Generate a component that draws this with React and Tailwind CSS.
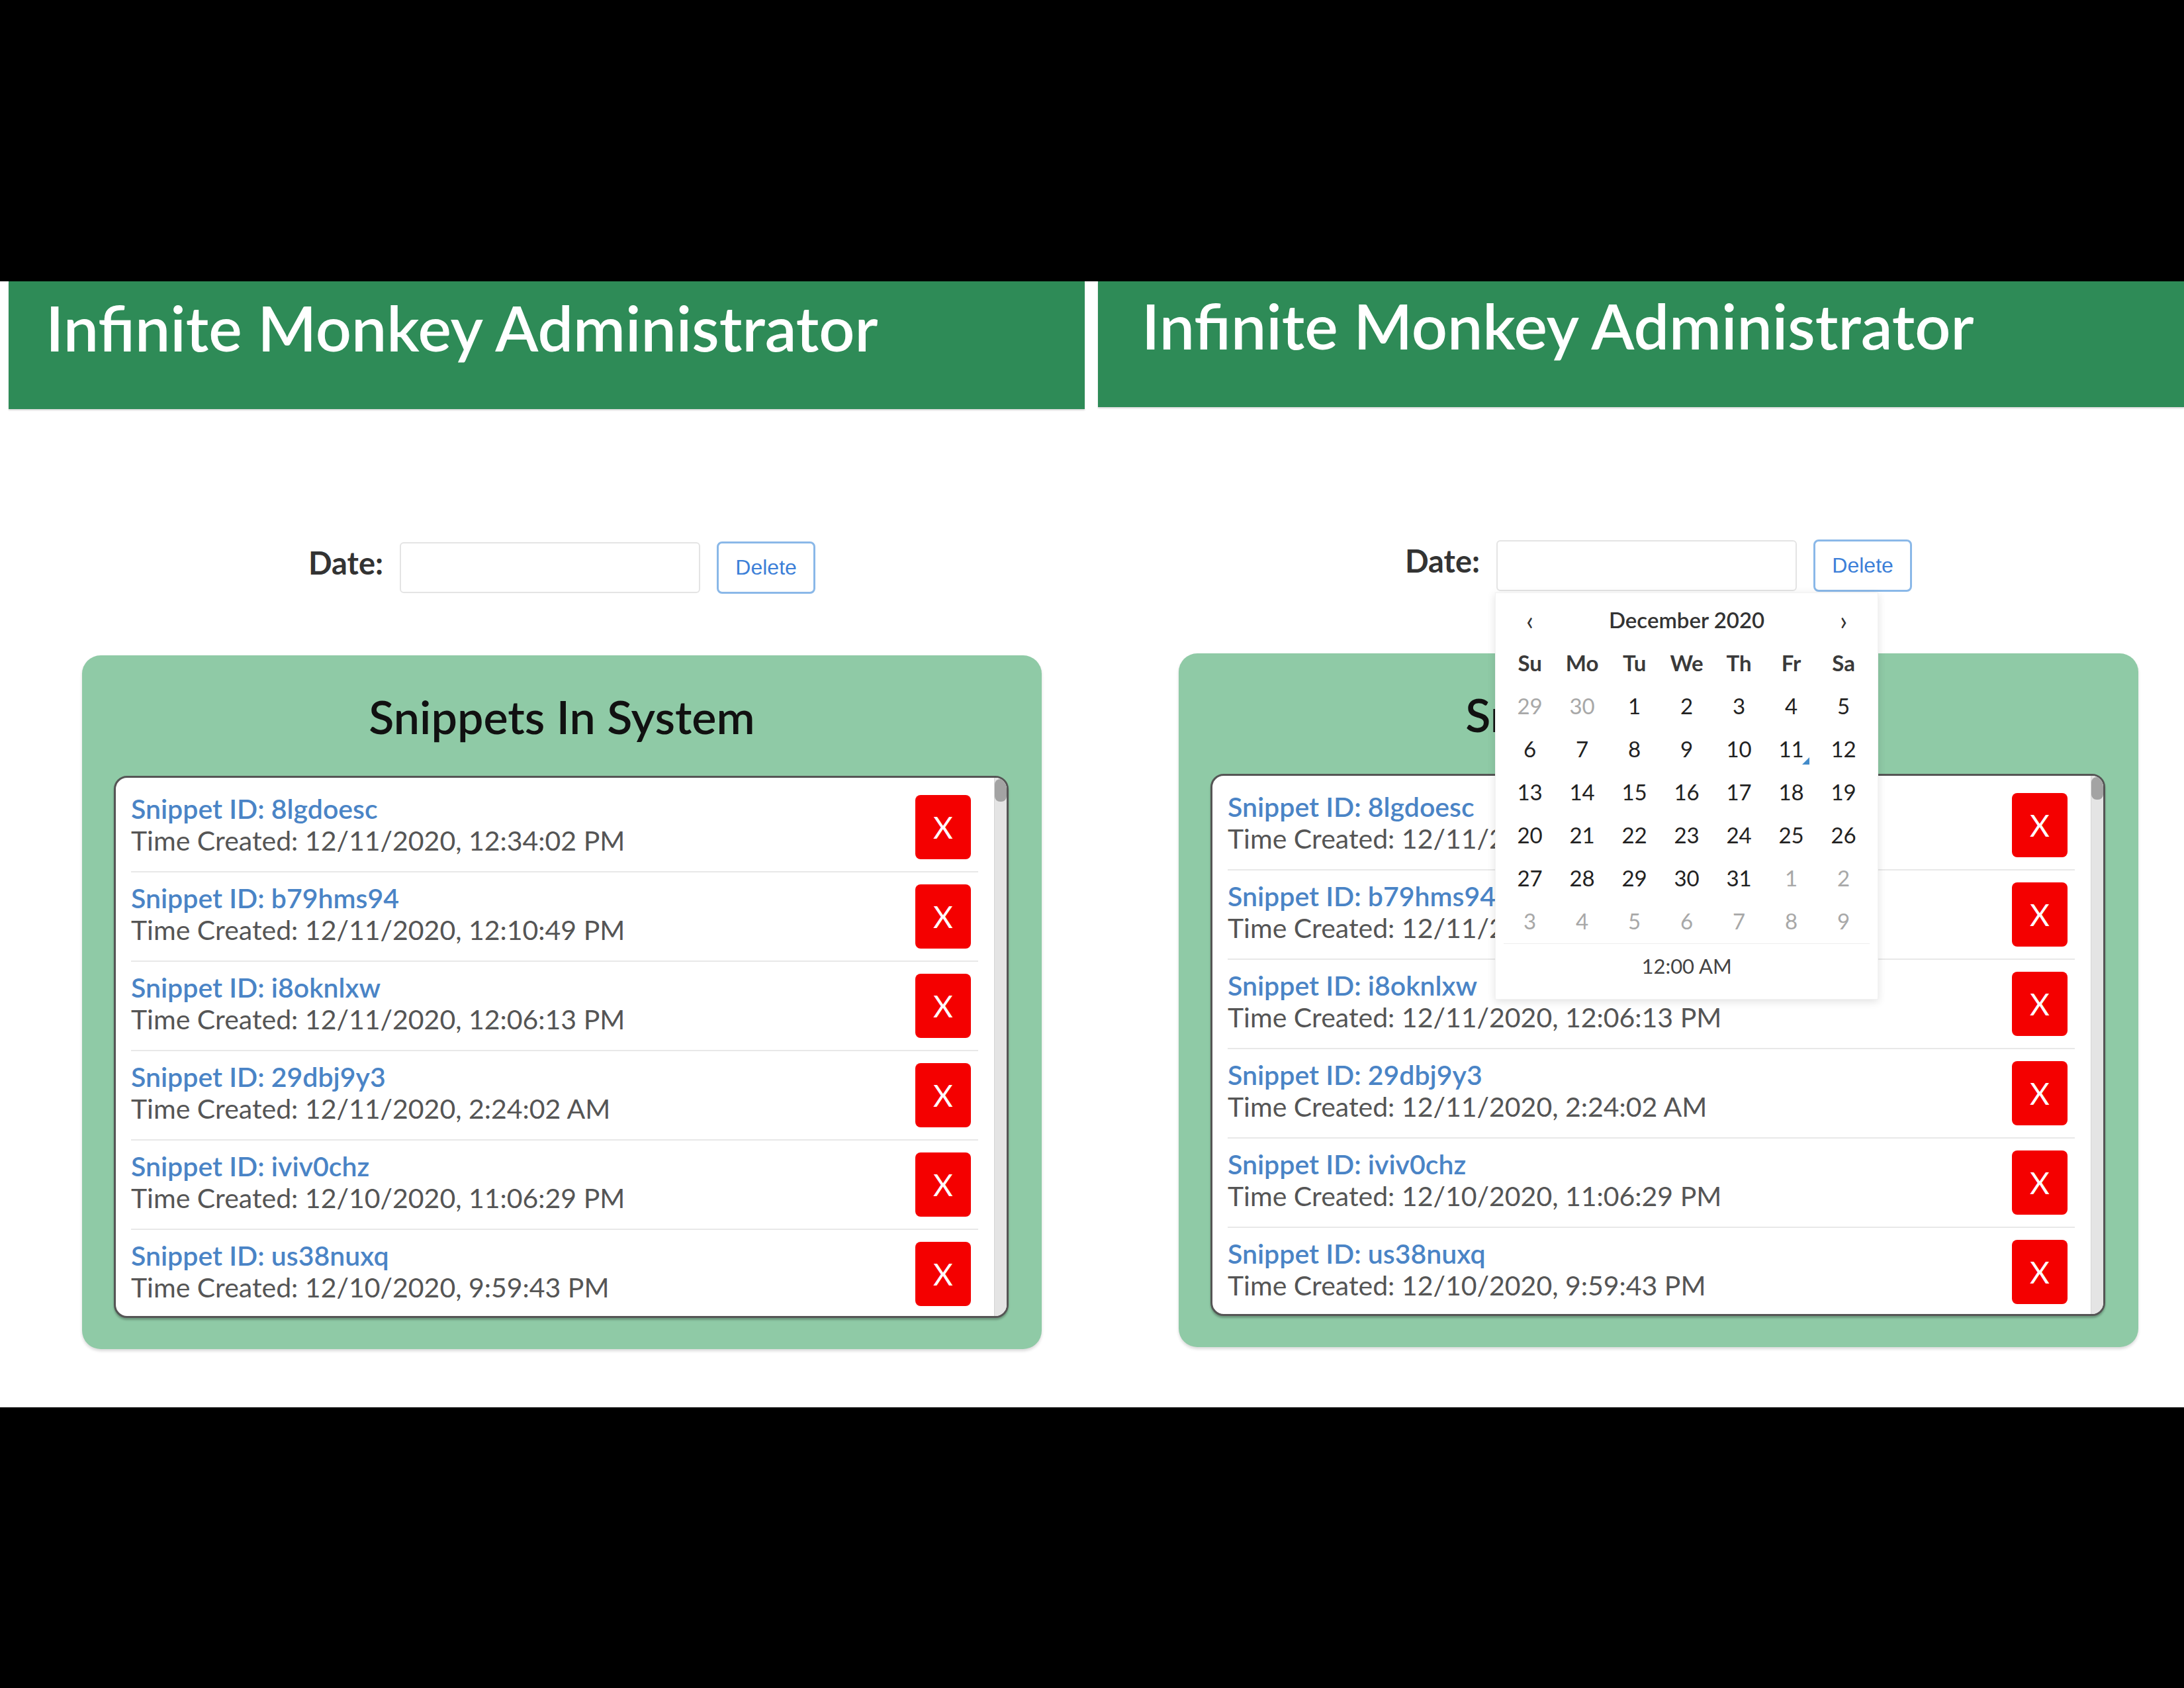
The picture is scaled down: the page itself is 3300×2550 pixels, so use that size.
const snippets = [
  { id: '8lgdoesc', time: '12/11/2020, 12:34:02 PM' },
  { id: 'b79hms94', time: '12/11/2020, 12:10:49 PM' },
  { id: 'i8oknlxw', time: '12/11/2020, 12:06:13 PM' },
  { id: '29dbj9y3', time: '12/11/2020, 2:24:02 AM' },
  { id: 'iviv0chz', time: '12/10/2020, 11:06:29 PM' },
  { id: 'us38nuxq', time: '12/10/2020, 9:59:43 PM' },
];

const weekdays = ['Su', 'Mo', 'Tu', 'We', 'Th', 'Fr', 'Sa'];

// [day, inCurrentMonth]
const weeks = [
  [[29, false], [30, false], [1, true], [2, true], [3, true], [4, true], [5, true]],
  [[6, true], [7, true], [8, true], [9, true], [10, true], [11, true], [12, true]],
  [[13, true], [14, true], [15, true], [16, true], [17, true], [18, true], [19, true]],
  [[20, true], [21, true], [22, true], [23, true], [24, true], [25, true], [26, true]],
  [[27, true], [28, true], [29, true], [30, true], [31, true], [1, false], [2, false]],
  [[3, false], [4, false], [5, false], [6, false], [7, false], [8, false], [9, false]],
];

const Calendar = () => (
  <div className="absolute left-[-2px] top-[79px] z-10 w-[579px] bg-white border border-[#f2f2f2] shadow-[0_3px_12px_rgba(0,0,0,0.12)] px-[12px] pt-[8px] pb-[16px] text-[#333]">
    <div className="grid grid-cols-7 h-[66px] items-center text-center">
      <span className="text-[40px] leading-none">‹</span>
      <span className="col-span-5 text-[33px] font-semibold">December 2020</span>
      <span className="text-[40px] leading-none">›</span>
    </div>
    <div className="grid grid-cols-7 h-[65px] items-center text-center text-[33px] font-bold text-[#3a3a3a]">
      {weekdays.map((d) => (
        <span key={d}>{d}</span>
      ))}
    </div>
    {weeks.map((week, i) => (
      <div key={i} className="grid grid-cols-7 h-[65px] items-center text-center text-[33px]">
        {week.map(([day, current], j) => (
          <span
            key={j}
            className={current ? 'relative h-full flex items-center justify-center text-[#222]' : 'relative h-full flex items-center justify-center text-[#a8a8a8]'}
          >
            {day}
            {current && day === 11 && (
              <svg className="absolute right-[12px] bottom-[10px]" width="11" height="11" viewBox="0 0 11 11">
                <polygon points="11,0 11,11 0,11" fill="#428bca" />
              </svg>
            )}
          </span>
        ))}
      </div>
    ))}
    <div className="border-t border-[#eeeeee] h-[68px] flex items-center justify-center text-[31px] text-[#444]">
      12:00 AM
    </div>
  </div>
);

const SnippetRow = ({ id, time }) => (
  <div className="h-[135px] shrink-0 flex items-center justify-between pr-[11px] border-b-2 border-[#e8e8e8]">
    <div className="text-[41px] leading-[48px] mb-[8px]">
      <div className="text-[#4a84c6] font-semibold">Snippet ID: {id}</div>
      <div className="text-[#555]">Time Created: {time}</div>
    </div>
    <button className="w-[84px] h-[97px] bg-[#f40000] rounded-[8px] text-white text-[46px] leading-none">X</button>
  </div>
);

const Panel = ({ panelClass, headerClass, showCalendar }) => (
  <div className={panelClass}>
    <div className={headerClass}>
      <h1 className="text-[95px] leading-none font-semibold text-white">Infinite Monkey Administrator</h1>
    </div>

    <div className="ml-[124px] w-[1450px]">
      <div className="mt-[199px] h-[80px] flex items-center justify-center">
        <label className="text-[47px] font-bold text-[#333] mb-[14px] mr-[25px]">Date:</label>
        <div className="relative">
          <div className="w-[454px] h-[77px] border-2 border-[#e4e4e4] rounded-[6px] bg-white" />
          {showCalendar && <Calendar />}
        </div>
        <button className="ml-[25px] w-[149px] h-[79px] border-[3px] border-[#8ab8e8] rounded-[8px] bg-white text-[32px] text-[#3c7fd8] font-['Liberation_Sans',Arial,sans-serif]">
          Delete
        </button>
      </div>

      <div className="mt-[93px] h-[1048px] rounded-[28px] bg-[#8fcaa6] shadow-[0_3px_4px_rgba(0,0,0,0.15)] pt-[50px]">
        <h2 className="text-[70px] leading-[1.2] font-semibold text-center text-[#111]">Snippets In System</h2>
        <div className="mt-[48px] ml-[48px] mr-[50px] h-[819px] border-[3px] border-[#555] rounded-[20px] bg-white flex overflow-hidden shadow-[0_3px_3px_rgba(0,0,0,0.25)]">
          <div className="flex-1 flex flex-col pl-[23px] pr-[24px] pt-[8px] overflow-hidden">
            {snippets.map((s) => (
              <SnippetRow key={s.id} id={s.id} time={s.time} />
            ))}
          </div>
          <div className="w-[19px] bg-[#e4e4e4] border-l border-[#d4d4d4] pt-[2px]">
            <div className="h-[34px] bg-[#a3a3a3] rounded-[8px]" />
          </div>
        </div>
      </div>
    </div>
  </div>
);

export default function App() {
  return (
    <div className="w-[3300px] h-[2550px] bg-black flex flex-col font-[Lato,sans-serif]">
      <div className="h-[425px] shrink-0" />
      <div className="h-[1701px] shrink-0 bg-white flex">
        <Panel
          panelClass="w-[1657px] shrink-0"
          headerClass="ml-[13px] mr-[18px] h-[193px] bg-[#2e8b57] pl-[56px] pt-[22px] shadow-[0_2px_2px_rgba(0,0,0,0.15)]"
          showCalendar={false}
        />
        <Panel
          panelClass="flex-1"
          headerClass="ml-[2px] h-[190px] bg-[#2e8b57] pl-[66px] pt-[19px] shadow-[0_2px_2px_rgba(0,0,0,0.15)]"
          showCalendar={true}
        />
      </div>
    </div>
  );
}
